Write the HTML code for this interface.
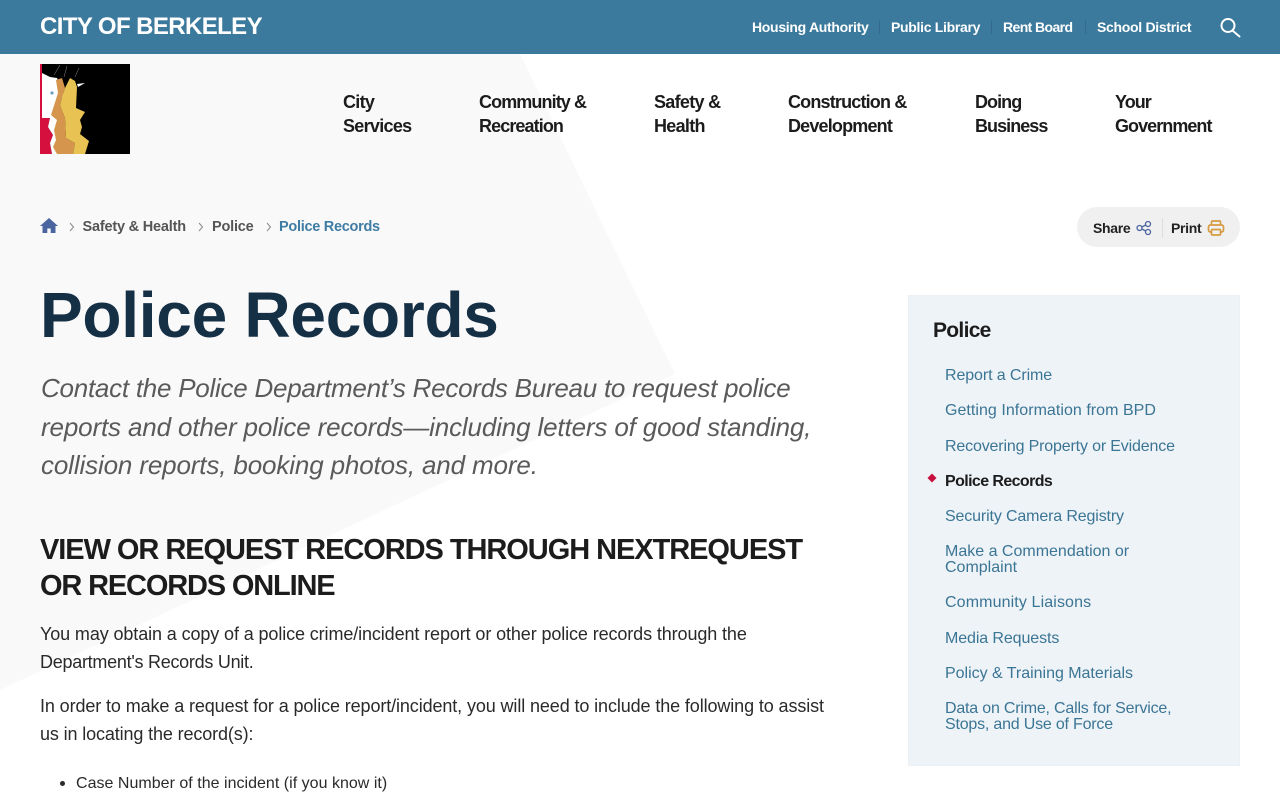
<!DOCTYPE html>
<html lang="en"><head><meta charset="utf-8"><title>Police Records - City of Berkeley</title>
<style>
html,body{margin:0;padding:0;width:1280px;height:800px;overflow:hidden;background:#fff}
body{position:relative;font-family:"Liberation Sans",sans-serif;color:#222}
a{color:inherit;text-decoration:none}
.t{position:absolute;white-space:nowrap;display:block;margin:0;font-weight:normal}
.bar{position:absolute;left:0;top:0;width:1280px;height:54px;background:#3c7a9d}
.top{font-size:14px;font-weight:bold;color:#fff;line-height:20px;top:17px}
.sep{position:absolute;top:20px;width:1px;height:14px;background:#33698a}
.nav{font-size:18px;font-weight:bold;line-height:24px;color:#1c1c1c}
.bc{font-size:14.5px;line-height:20px;top:217px;color:#555;font-weight:bold}
.lead{font-size:26px;font-style:italic;line-height:38px;color:#5a5a5a}
.h2{font-size:29px;font-weight:bold;line-height:36px;color:#1c1c1c}
.p{font-size:18px;line-height:28px;color:#2a2a2a}
.side{position:absolute;left:908px;top:295px;width:330px;height:469px;background:#eef3f8;border:1px solid #ebf0f5}
.s{font-size:16px;line-height:16px;color:#3b7594;left:945px}
</style></head><body>
<svg style="position:absolute;left:0;top:54px" width="700" height="660"><polygon points="0,0 520,0 675,320 0,636" fill="#f9f9fa"/></svg>
<header class="bar"></header>
<a class="t" style="left:40px;top:12px;font-size:24px;font-weight:bold;line-height:30px;color:#fff;letter-spacing:-.6px">CITY OF BERKELEY</a>
<a class="t top" style="left:752px;letter-spacing:-.3px">Housing Authority</a><i class="sep" style="left:879px"></i>
<a class="t top" style="left:891px;letter-spacing:-.3px">Public Library</a><i class="sep" style="left:991px"></i>
<a class="t top" style="left:1003px;letter-spacing:-.6px">Rent Board</a><i class="sep" style="left:1085px"></i>
<a class="t top" style="left:1097px;letter-spacing:-.3px">School District</a>
<svg style="position:absolute;left:1219px;top:16px" width="22" height="22" fill="none" stroke="#fff" stroke-width="2"><circle cx="9" cy="9.500" r="6.500"/><path d="M14 15l6.500 5.500" stroke-linecap="round"/></svg>

<svg style="position:absolute;left:40px;top:64px" width="90" height="90" viewBox="0 0 90 90">
<rect width="90" height="90" fill="#000"/>
<polygon points="0,0 2,0 2,54 10,54 8,63 13,71 10,79 12,90 0,90" fill="#d5103f"/>
<polygon points="2,9 10,13 17,14 24,30 14,52 18,56 16,66 20,78 17,90 12,90 10,79 13,71 8,63 10,54 2,54" fill="#fff"/>
<polygon points="22,14 25,24 20,41 25,54 26,74 35,79 33,90 17,90 13,83 16,76 14,66 17,56 11,51 18,29 16,16" fill="#d5954c"/>
<polygon points="30,14 35,17 37,23 36,44 45,48 40,56 42,63 40,70 49,77 45,90 33,90 35,79 26,74 25,54 20,41 25,24" fill="#e8c353"/>
<polygon points="37,20 45,19 38,23" fill="#fff"/>
<circle cx="12" cy="29" r="1.600" fill="#6f9fc0"/>
<path d="M20 1L14 11M27 2L24 13M39 4L35 13" stroke="#fff" stroke-opacity=".55" stroke-width=".5" fill="none"/>
</svg>

<nav>
<a class="t nav" style="left:343px;top:90px;letter-spacing:-.7px">City<br>Services</a>
<a class="t nav" style="left:479px;top:90px;letter-spacing:-.9px">Community &amp;<br>Recreation</a>
<a class="t nav" style="left:654px;top:90px;letter-spacing:-.7px">Safety &amp;<br>Health</a>
<a class="t nav" style="left:788px;top:90px;letter-spacing:-.82px">Construction &amp;<br>Development</a>
<a class="t nav" style="left:975px;top:90px;letter-spacing:-.95px">Doing<br>Business</a>
<a class="t nav" style="left:1115px;top:90px;letter-spacing:-.95px">Your<br>Government</a>
</nav>

<svg style="position:absolute;left:40px;top:217px" width="18" height="17" viewBox="0 0 18 17"><path d="M9 1L0 9h2.500v7h4.800v-4.500h3.400V16h4.800V9H18z" fill="#4a65a0"/></svg>
<svg style="position:absolute;left:68px;top:221px" width="8" height="12" fill="none" stroke="#888" stroke-width="1"><path d="M2 2l3.500 4L2 10"/></svg>
<a class="t bc" style="left:82.500px;letter-spacing:-.2px">Safety &amp; Health</a>
<svg style="position:absolute;left:197px;top:221px" width="8" height="12" fill="none" stroke="#888" stroke-width="1"><path d="M2 2l3.500 4L2 10"/></svg>
<a class="t bc" style="left:212px;letter-spacing:-.2px">Police</a>
<svg style="position:absolute;left:265px;top:221px" width="8" height="12" fill="none" stroke="#888" stroke-width="1"><path d="M2 2l3.500 4L2 10"/></svg>
<span class="t bc" style="left:279px;color:#3f7ca3;letter-spacing:-.28px">Police Records</span>

<div style="position:absolute;left:1077px;top:207px;width:163px;height:40px;border-radius:20px;background:#f0f0f0"></div>
<a class="t" style="left:1093px;top:218px;font-size:14px;font-weight:bold;line-height:20px;color:#222;letter-spacing:-.3px">Share</a>
<svg style="position:absolute;left:1136px;top:220px" width="16" height="16" fill="none" stroke="#4a65a0" stroke-width="1.300"><circle cx="3.500" cy="8" r="2.500"/><circle cx="12" cy="4" r="2.500"/><circle cx="12" cy="12" r="2.500"/><path d="M5.800 7l4-2M5.800 9l4 2"/></svg>
<i style="position:absolute;left:1162px;top:218px;width:1px;height:20px;background:#ddd"></i>
<a class="t" style="left:1171px;top:218px;font-size:14px;font-weight:bold;line-height:20px;color:#222;letter-spacing:-.3px">Print</a>
<svg style="position:absolute;left:1207px;top:219px" width="18" height="18" fill="none" stroke="#d69a3f" stroke-width="1.700"><path d="M4.500 6V3q0-1 1-1h7q1 0 1 1v3"/><rect x="1.500" y="6" width="15" height="7" rx="2"/><rect x="4.500" y="10.500" width="9" height="5.500" rx="1" fill="#f0f0f0"/></svg>

<h1 class="t" style="left:40px;top:277px;font-size:64px;font-weight:bold;line-height:76px;color:#152f45;letter-spacing:-.27px">Police Records</h1>
<span class="t lead" style="left:41px;top:369px;letter-spacing:-.25px">Contact the Police Department’s Records Bureau to request police</span>
<span class="t lead" style="left:41px;top:408px;letter-spacing:-.15px">reports and other police records—including letters of good standing,</span>
<span class="t lead" style="left:41px;top:446px;letter-spacing:-.14px">collision reports, booking photos, and more.</span>
<h2 class="t h2" style="left:40px;top:532px;letter-spacing:-1.05px">VIEW OR REQUEST RECORDS THROUGH NEXTREQUEST</h2>
<h2 class="t h2" style="left:40px;top:568px;letter-spacing:-1.16px">OR RECORDS ONLINE</h2>
<p class="t p" style="left:40px;top:620px;letter-spacing:-.11px">You may obtain a copy of a police crime/incident report or other police records through the</p>
<p class="t p" style="left:40px;top:648px;letter-spacing:-.27px">Department's Records Unit.</p>
<p class="t p" style="left:40px;top:692px;letter-spacing:-.11px">In order to make a request for a police report/incident, you will need to include the following to assist</p>
<p class="t p" style="left:40px;top:720px;letter-spacing:-.13px">us in locating the record(s):</p>
<i style="position:absolute;left:60px;top:781px;width:5px;height:5px;border-radius:50%;background:#2a2a2a"></i>
<span class="t" style="left:76px;top:770px;font-size:16px;line-height:28px;color:#2a2a2a;letter-spacing:.02px">Case Number of the incident (if you know it)</span>

<aside class="side"></aside>
<h3 class="t" style="left:933px;top:317px;font-size:21px;font-weight:bold;line-height:28px;color:#1c1c1c;letter-spacing:-.7px">Police</h3>
<a class="t s" style="top:368px;letter-spacing:-.1px">Report a Crime</a>
<a class="t s" style="top:403px;letter-spacing:.04px">Getting Information from BPD</a>
<a class="t s" style="top:439px;letter-spacing:-.16px">Recovering Property or Evidence</a>
<svg style="position:absolute;left:927px;top:473px" width="10" height="10"><polygon points="5,.5 9.500,5 5,9.500 .5,5" fill="#c8103e"/></svg>
<span class="t s" style="top:474px;font-weight:bold;color:#1c1c1c;letter-spacing:-.6px">Police Records</span>
<a class="t s" style="top:509px;letter-spacing:-.14px">Security Camera Registry</a>
<a class="t s" style="top:544px;letter-spacing:0">Make a Commendation or<br>Complaint</a>
<a class="t s" style="top:595px;letter-spacing:.12px">Community Liaisons</a>
<a class="t s" style="top:631px;letter-spacing:-.1px">Media Requests</a>
<a class="t s" style="top:666px;letter-spacing:-.02px">Policy &amp; Training Materials</a>
<a class="t s" style="top:701px;letter-spacing:-.2px">Data on Crime, Calls for Service,<br>Stops, and Use of Force</a>
</body></html>
